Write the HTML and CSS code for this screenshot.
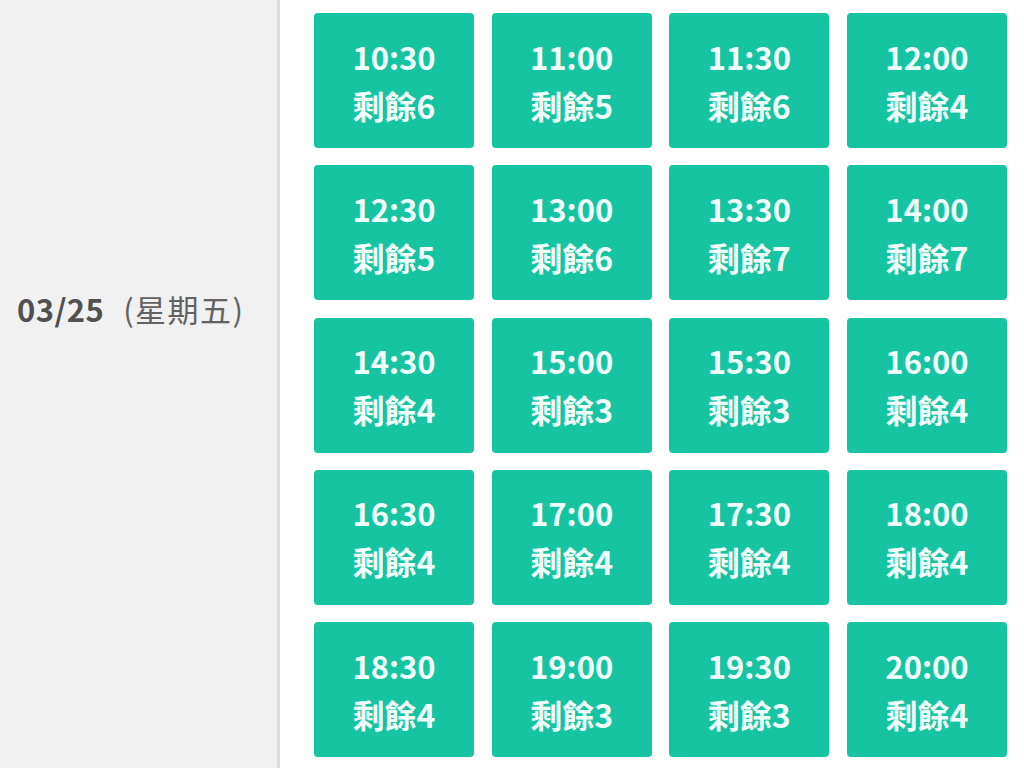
FILE: index.html
```html
<!DOCTYPE html>
<html lang="zh-Hant">
<head>
    <meta charset="UTF-8">
    <meta name="viewport" content="width=device-width, initial-scale=1.0">
    <title>預約時段</title>
    <link rel="stylesheet" href="styles.css">
</head>
<body>
    <div class="day-row">
        <div class="day-label">
            <span class="day-date">03/25</span> <span class="day-week">(星期五)</span>
        </div>
        <div class="slot-grid">
            <button class="slot"><span class="slot-time">10:30</span><span class="slot-left">剩餘6</span></button>
            <button class="slot"><span class="slot-time">11:00</span><span class="slot-left">剩餘5</span></button>
            <button class="slot"><span class="slot-time">11:30</span><span class="slot-left">剩餘6</span></button>
            <button class="slot"><span class="slot-time">12:00</span><span class="slot-left">剩餘4</span></button>
            <button class="slot"><span class="slot-time">12:30</span><span class="slot-left">剩餘5</span></button>
            <button class="slot"><span class="slot-time">13:00</span><span class="slot-left">剩餘6</span></button>
            <button class="slot"><span class="slot-time">13:30</span><span class="slot-left">剩餘7</span></button>
            <button class="slot"><span class="slot-time">14:00</span><span class="slot-left">剩餘7</span></button>
            <button class="slot"><span class="slot-time">14:30</span><span class="slot-left">剩餘4</span></button>
            <button class="slot"><span class="slot-time">15:00</span><span class="slot-left">剩餘3</span></button>
            <button class="slot"><span class="slot-time">15:30</span><span class="slot-left">剩餘3</span></button>
            <button class="slot"><span class="slot-time">16:00</span><span class="slot-left">剩餘4</span></button>
            <button class="slot"><span class="slot-time">16:30</span><span class="slot-left">剩餘4</span></button>
            <button class="slot"><span class="slot-time">17:00</span><span class="slot-left">剩餘4</span></button>
            <button class="slot"><span class="slot-time">17:30</span><span class="slot-left">剩餘4</span></button>
            <button class="slot"><span class="slot-time">18:00</span><span class="slot-left">剩餘4</span></button>
            <button class="slot"><span class="slot-time">18:30</span><span class="slot-left">剩餘4</span></button>
            <button class="slot"><span class="slot-time">19:00</span><span class="slot-left">剩餘3</span></button>
            <button class="slot"><span class="slot-time">19:30</span><span class="slot-left">剩餘3</span></button>
            <button class="slot"><span class="slot-time">20:00</span><span class="slot-left">剩餘4</span></button>
        </div>
    </div>
</body>
</html>
```

FILE: styles.css
```css
body {
    margin: 0;
    background-color: #fff;
    font-family: "Noto Sans CJK TC", "Noto Sans", sans-serif;
    overflow: hidden;
}
.day-row {
    display: flex;
    min-height: 768px;
}
.day-label {
    width: 280px;
    flex-shrink: 0;
    box-sizing: border-box;
    padding: 286px 0 0 17px;
    background-color: #f1f1f1;
    border-right: 3px solid #dcdcdc;
    font-size: 31px;
    line-height: 46px;
    color: #5a5a5a;
    white-space: nowrap;
}
.day-date {
    font-weight: bold;
    color: #505050;
    letter-spacing: 0.4px;
}
.day-week {
    color: #626262;
    margin-left: 12px;
    letter-spacing: 1.5px;
}
.slot-grid {
    display: grid;
    grid-template-columns: repeat(4, 160px);
    grid-auto-rows: 135px;
    column-gap: 17.67px;
    row-gap: 17.25px;
    padding: 13px 0 0 34px;
}
.slot {
    display: flex;
    flex-direction: column;
    align-items: center;
    justify-content: center;
    padding: 0;
    border: none;
    border-radius: 4px;
    background-color: #17c4a2;
    color: #f0fffa;
    font-family: inherit;
    font-weight: bold;
    cursor: pointer;
}
.slot-time {
    font-size: 31px;
    line-height: 49px;
}
.slot-left {
    font-size: 32px;
    line-height: 49px;
}
```
